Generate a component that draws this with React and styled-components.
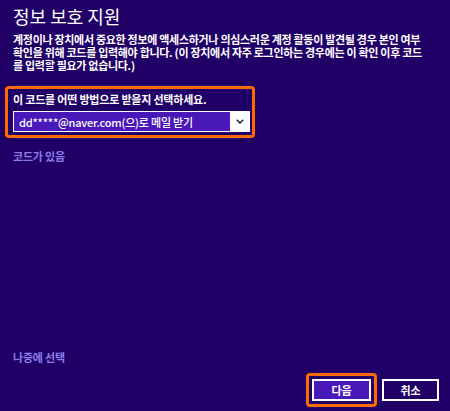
import React from 'react'
import styled, { createGlobalStyle } from 'styled-components'

const GlobalStyle = createGlobalStyle`
  body {
    margin: 0;
    background: #200066;
  }
`

const Page = styled.div`
  width: 450px;
  height: 411px;
  box-sizing: border-box;
  padding: 0 11px 4px 13px;
  display: flex;
  flex-direction: column;
  background: #200066;
  color: #ffffff;
  font-family: "Noto Sans CJK KR", "Noto Sans", sans-serif;
  overflow: hidden;
`

const Title = styled.h1`
  margin: 4px 0 0;
  font-size: 18px;
  font-weight: 400;
  line-height: 24px;
  letter-spacing: 0;
`

const Description = styled.p`
  margin: 5px 0 0;
  width: 410px;
  font-size: 11px;
  font-weight: 700;
  line-height: 13px;
  letter-spacing: -0.3px;
`

const Highlight = styled.div`
  margin: 14px 0 0 -8px;
  width: 250px;
  box-sizing: border-box;
  border: 3px solid #ff6a00;
  border-radius: 4px;
  padding: 4px 2px 3px 5px;
`

const Label = styled.div`
  font-size: 11px;
  font-weight: 700;
  line-height: 13px;
  letter-spacing: -0.2px;
  margin-bottom: 5px;
`

const SelectBox = styled.div`
  display: flex;
  height: 21px;
  box-sizing: border-box;
  border: 1px solid #ffffff;
  background: #4818b8;
`

const SelectValue = styled.div`
  flex: 1;
  padding-left: 5px;
  display: flex;
  align-items: center;
  font-size: 11px;
  font-weight: 500;
  letter-spacing: -0.2px;
  color: #ffffff;
`

const Arrow = styled.div`
  width: 19px;
  background: #ffffff;
  display: flex;
  align-items: center;
  justify-content: center;
`

const LinkText = styled.div`
  margin-top: ${(p) => p.$top || '0'};
  color: #8d7de8;
  font-size: 11px;
  font-weight: 700;
  line-height: 13px;
  letter-spacing: -0.2px;
`

const Spacer = styled.div`
  flex: 1;
`

const Footer = styled.div`
  margin-top: 9px;
  display: flex;
  justify-content: flex-end;
  align-items: center;
  gap: 5px;
`

const ButtonFrame = styled.div`
  border: 3px solid #ff6a00;
  border-radius: 4px;
  padding: 3px;
  display: flex;
`

const Button = styled.button`
  width: ${(p) => (p.$primary ? '59px' : '57px')};
  height: 22px;
  box-sizing: border-box;
  border: 2px solid #ffffff;
  background: ${(p) => (p.$primary ? '#4818b8' : '#200066')};
  color: #ffffff;
  font-family: "Noto Sans CJK KR", sans-serif;
  font-size: 11px;
  font-weight: 700;
  padding: 0;
  display: flex;
  align-items: center;
  justify-content: center;
`

export default function App() {
  return (
    <>
      <GlobalStyle />
      <Page>
        <Title>정보 보호 지원</Title>
        <Description>
          계정이나 장치에서 중요한 정보에 액세스하거나 의심스러운 계정 활동이 발견될 경우 본인 여부
          확인을 위해 코드를 입력해야 합니다. (이 장치에서 자주 로그인하는 경우에는 이 확인 이후 코드를
          입력할 필요가 없습니다.)
        </Description>
        <Highlight>
          <Label>이 코드를 어떤 방법으로 받을지 선택하세요.</Label>
          <SelectBox>
            <SelectValue>dd*****@naver.com(으)로 메일 받기</SelectValue>
            <Arrow>
              <svg width="8" height="5" viewBox="0 0 8 5">
                <path d="M0.8 0.8 L4 4 L7.2 0.8" fill="none" stroke="#1a1a40" strokeWidth="1.5" />
              </svg>
            </Arrow>
          </SelectBox>
        </Highlight>
        <LinkText $top="12px">코드가 있음</LinkText>
        <Spacer />
        <LinkText>나중에 선택</LinkText>
        <Footer>
          <ButtonFrame>
            <Button $primary>다음</Button>
          </ButtonFrame>
          <Button>취소</Button>
        </Footer>
      </Page>
    </>
  )
}
